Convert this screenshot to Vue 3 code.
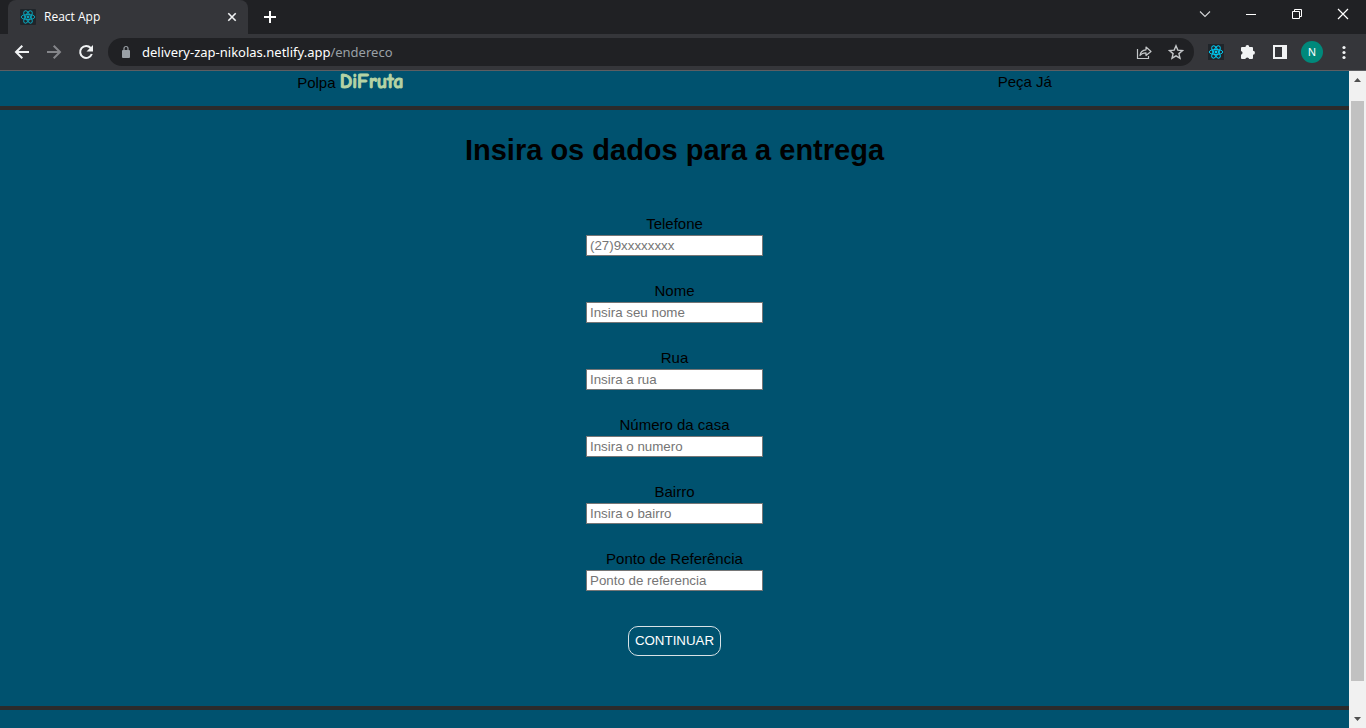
<script setup>
import { reactive } from 'vue'

const fields = [
  { id: 'telefone', label: 'Telefone', placeholder: '(27)9xxxxxxxx', type: 'tel' },
  { id: 'nome', label: 'Nome', placeholder: 'Insira seu nome', type: 'text' },
  { id: 'rua', label: 'Rua', placeholder: 'Insira a rua', type: 'text' },
  { id: 'numero', label: 'Número da casa', placeholder: 'Insira o numero', type: 'text' },
  { id: 'bairro', label: 'Bairro', placeholder: 'Insira o bairro', type: 'text' },
  { id: 'referencia', label: 'Ponto de Referência', placeholder: 'Ponto de referencia', type: 'text' }
]

const form = reactive(Object.fromEntries(fields.map((f) => [f.id, ''])))
</script>

<template>
  <div class="window">
    <header class="browser">
      <div class="tab-strip">
        <div class="tab">
          <svg class="react" width="16" height="16" viewBox="0 0 16 16" aria-hidden="true">
            <rect width="16" height="16" rx="1" />
            <g>
              <ellipse cx="8" cy="8" rx="6.8" ry="2.6" />
              <ellipse cx="8" cy="8" rx="6.8" ry="2.6" transform="rotate(60 8 8)" />
              <ellipse cx="8" cy="8" rx="6.8" ry="2.6" transform="rotate(120 8 8)" />
            </g>
            <circle cx="8" cy="8" r="1.4" />
          </svg>
          <span class="tab-title">React App</span>
          <button class="tab-close" type="button" aria-label="Fechar guia">
            <svg width="16" height="16" viewBox="0 0 16 16"><path d="M4.3 4.3l7.4 7.4M11.7 4.3l-7.4 7.4" stroke="#f1f3f4" stroke-width="1.6" /></svg>
          </button>
        </div>
        <button class="icon-button new-tab" type="button" aria-label="Nova guia">
          <svg width="16" height="16" viewBox="0 0 16 16"><path d="M8 2v12M2 8h12" stroke="#fff" stroke-width="2" /></svg>
        </button>
        <div class="window-controls">
          <button type="button" aria-label="Pesquisar guias">
            <svg width="12" height="12" viewBox="0 0 12 12"><path d="M1 3.5l5 5 5-5" fill="none" stroke="#d5d6d8" stroke-width="1.1" /></svg>
          </button>
          <button type="button" aria-label="Minimizar">
            <svg width="12" height="12" viewBox="0 0 12 12"><path d="M1 6.5h10" stroke="#fff" /></svg>
          </button>
          <button type="button" aria-label="Restaurar">
            <svg width="12" height="12" viewBox="0 0 12 12"><path d="M1.5 3.5h7v7h-7zM3.5 3.5v-2h7v7h-2" fill="none" stroke="#fff" /></svg>
          </button>
          <button type="button" aria-label="Fechar">
            <svg width="12" height="12" viewBox="0 0 12 12"><path d="M1 1l10 10M11 1L1 11" stroke="#fff" stroke-width="1.2" /></svg>
          </button>
        </div>
      </div>

      <div class="toolbar">
        <nav class="tools" aria-label="Navegação">
          <button class="icon-button" type="button" aria-label="Voltar">
            <svg width="16" height="16" viewBox="0 0 16 16"><path d="M15 8H2.5M8.3 1.7L2 8l6.3 6.3" fill="none" stroke="#f1f3f4" stroke-width="2" /></svg>
          </button>
          <button class="icon-button" type="button" aria-label="Avançar">
            <svg width="16" height="16" viewBox="0 0 16 16"><path d="M1 8h12.5M7.7 1.7L14 8l-6.3 6.3" fill="none" stroke="#85868a" stroke-width="2" /></svg>
          </button>
          <button class="icon-button" type="button" aria-label="Recarregar">
            <svg width="16" height="16" viewBox="0 0 16 16"><path d="M12.7 4A6 6 0 1 0 13.8 10" fill="none" stroke="#f1f3f4" stroke-width="2" /><path d="M15 1v6.5H8.5z" fill="#f1f3f4" /></svg>
          </button>
        </nav>
        <div class="address">
          <svg width="12" height="14" viewBox="0 0 12 14" aria-hidden="true"><rect x="2" y="5" width="8" height="8" rx="1" fill="#9aa0a6" /><path d="M4 5.5V3.5a2 2 0 0 1 4 0v2" fill="none" stroke="#9aa0a6" stroke-width="1.2" /></svg>
          <span class="url">delivery-zap-nikolas.netlify.app<span class="path">/endereco</span></span>
          <button class="icon-button" type="button" aria-label="Compartilhar">
            <svg width="16" height="16" viewBox="0 0 16 16" fill="none" stroke="#c4c7c9" stroke-width="1.2"><path d="M1.5 5v9.5h11V12" /><path d="M4 11.5c.5-4 2.5-5.5 6-5.700V3l5 4.500-5 4V8.800c-2.700 0-4.500.7-6 2.700z" stroke-linejoin="round" /></svg>
          </button>
          <button class="icon-button" type="button" aria-label="Adicionar aos favoritos">
            <svg width="16" height="16" viewBox="0 0 16 16"><path d="M8 1.8l1.8 4.3 4.7.4-3.6 3.1 1.1 4.6L8 11.8l-4 2.4 1.1-4.6-3.6-3.1 4.7-.4z" fill="none" stroke="#c4c7c9" stroke-width="1.4" /></svg>
          </button>
        </div>
        <div class="tools">
          <button class="icon-button" type="button" aria-label="React Developer Tools">
            <svg class="react bright" width="16" height="16" viewBox="0 0 16 16">
              <rect width="16" height="16" />
              <g>
                <ellipse cx="8" cy="8" rx="6.8" ry="2.6" />
                <ellipse cx="8" cy="8" rx="6.8" ry="2.6" transform="rotate(60 8 8)" />
                <ellipse cx="8" cy="8" rx="6.8" ry="2.6" transform="rotate(120 8 8)" />
              </g>
              <circle cx="8" cy="8" r="1.4" />
            </svg>
          </button>
          <button class="icon-button" type="button" aria-label="Extensões">
            <svg width="16" height="16" viewBox="0 0 16 16"><path d="M2 3h3.5a1.9 1.9 0 0 1 3.8 0H12a1 1 0 0 1 1 1v2.8a1.950 1.950 0 0 1 0 3.9V14a1 1 0 0 1-1 1H9.2a2 2 0 0 0-3.9 0H2a1 1 0 0 1-1-1v-3.2a2 2 0 0 0 0-3.9V4a1 1 0 0 1 1-1z" fill="#f1f3f4" /></svg>
          </button>
          <button class="icon-button" type="button" aria-label="Painel lateral">
            <svg width="16" height="16" viewBox="0 0 16 16"><path fill-rule="evenodd" d="M1 1h14v14H1zM3 3v10h7V3z" fill="#f1f3f4" /></svg>
          </button>
          <button class="icon-button" type="button" aria-label="Perfil">
            <span class="avatar">N</span>
          </button>
          <button class="icon-button" type="button" aria-label="Menu">
            <svg width="16" height="16" viewBox="0 0 16 16" fill="#f1f3f4"><circle cx="8" cy="3.5" r="1.6" /><circle cx="8" cy="8.5" r="1.6" /><circle cx="8" cy="13.5" r="1.6" /></svg>
          </button>
        </div>
      </div>
    </header>

    <div class="viewport">
      <div class="page">
        <header class="site-header">
          <div>Polpa <strong class="brand">DiFruta</strong></div>
          <div>Peça Já</div>
        </header>
        <main>
          <h1>Insira os dados para a entrega</h1>
          <form @submit.prevent>
            <div v-for="field in fields" :key="field.id" class="field">
              <label :for="field.id">{{ field.label }}</label>
              <input :id="field.id" v-model="form[field.id]" :type="field.type" :placeholder="field.placeholder" />
            </div>
            <button class="submit" type="submit">CONTINUAR</button>
          </form>
        </main>
        <footer></footer>
      </div>
      <div class="scrollbar" aria-hidden="true">
        <svg width="17" height="17" viewBox="0 0 17 17"><path d="M5 11l3.5-4L12 11z" fill="#505050" /></svg>
        <div class="track"><div class="thumb"></div></div>
        <svg width="17" height="17" viewBox="0 0 17 17"><path d="M5 6l3.5 4L12 6z" fill="#505050" /></svg>
      </div>
    </div>
  </div>
</template>

<style>
body {
  margin: 0;
}
</style>

<style scoped>
.window {
  display: flex;
  flex-direction: column;
  height: 100vh;
  overflow: hidden;
  background: #00526f;
}

button {
  border: 0;
  padding: 0;
  background: none;
}

svg {
  display: block;
}

.browser {
  flex: none;
  background: #35363a;
  border-bottom: 1px solid #5d5e62;
  color: #fff;
}

.tab-strip {
  display: flex;
  height: 34px;
  padding-left: 8px;
  background: #202124;
}

.tab {
  display: flex;
  align-items: center;
  gap: 8px;
  box-sizing: border-box;
  width: 240px;
  padding: 0 8px 0 12px;
  border-radius: 8px 8px 0 0;
  background: #35363a;
}

.tab-title {
  flex: 1;
  font: 12px/16px "Open Sans", "Noto Sans", sans-serif;
}

.react rect {
  fill: #20252a;
}

.react g {
  fill: none;
  stroke: #0aa2b8;
  stroke-width: 1;
}

.react circle {
  fill: #0aa2b8;
}

.react.bright g {
  stroke: #00c8f0;
}

.react.bright circle {
  fill: #00c8f0;
}

.icon-button {
  display: flex;
  align-items: center;
  justify-content: center;
  flex: none;
  width: 28px;
  height: 28px;
}

.new-tab {
  margin: 3px 8px;
}

.window-controls {
  display: flex;
  height: 28px;
  margin-left: auto;
}

.window-controls button {
  display: flex;
  align-items: center;
  justify-content: center;
  width: 46px;
}

.toolbar {
  display: flex;
  gap: 8px;
  padding: 4px 8px;
}

.tools {
  display: flex;
  gap: 4px;
}

.address {
  display: flex;
  align-items: center;
  flex: 1;
  gap: 4px;
  min-width: 0;
  padding: 0 4px 0 12px;
  border-radius: 14px;
  background: #202124;
}

.url {
  flex: 1;
  margin-left: 6px;
  font: 13px/20px "Noto Sans", "Open Sans", sans-serif;
  white-space: nowrap;
}

.path {
  color: #9aa0a6;
}

.avatar {
  width: 22px;
  border-radius: 50%;
  background: #00897b;
  color: #fff;
  font: 11px/22px "Liberation Sans", sans-serif;
  text-align: center;
}

.viewport {
  display: flex;
  flex: 1;
  min-height: 0;
}

.page {
  flex: 1;
  overflow: hidden;
  background: #00526f;
  color: #000;
  font: 15px/21px "Franklin Gothic Medium", "Liberation Sans", Arial, sans-serif;
}

.site-header {
  display: flex;
  justify-content: space-around;
  padding-bottom: 13px;
  border-bottom: 4px solid #2b2b2b;
}

.brand {
  color: #b5d3a4;
  font: bold 20px/21px "Comic Sans MS", "Comic Neue", Lato, sans-serif;
  -webkit-text-stroke: 1px #b5d3a4;
}

main {
  padding: 20px 0 50px;
}

h1 {
  margin: 0;
  font-size: 29px;
  line-height: 40px;
  text-align: center;
}

form {
  display: flex;
  flex-direction: column;
  align-items: center;
  padding-top: 44px;
}

.field {
  display: flex;
  flex-direction: column;
  align-items: center;
  gap: 2px;
  margin-bottom: 25px;
}

.field label {
  line-height: 19px;
}

.field input {
  box-sizing: border-box;
  width: 177px;
  height: 21px;
  padding: 1px 3px;
  border: 1px solid #767676;
  border-radius: 0;
  background: #fff;
  font-family: "Liberation Sans", Arial, sans-serif;
}

.field input::placeholder {
  color: #757575;
}

.submit {
  height: 30px;
  margin-top: 10px;
  padding: 0 6px 2px;
  border: 1px solid #d8e2e6;
  border-radius: 10px;
  color: #fff;
  font-family: "Liberation Sans", Arial, sans-serif;
}

footer {
  height: 40px;
  border-top: 4px solid #2b2b2b;
}

.scrollbar {
  display: flex;
  flex-direction: column;
  width: 17px;
  background: #f1f1f1;
}

.track {
  flex: 1;
  padding: 13px 2px 0;
}

.thumb {
  height: 95%;
  background: #c1c1c1;
}
</style>
